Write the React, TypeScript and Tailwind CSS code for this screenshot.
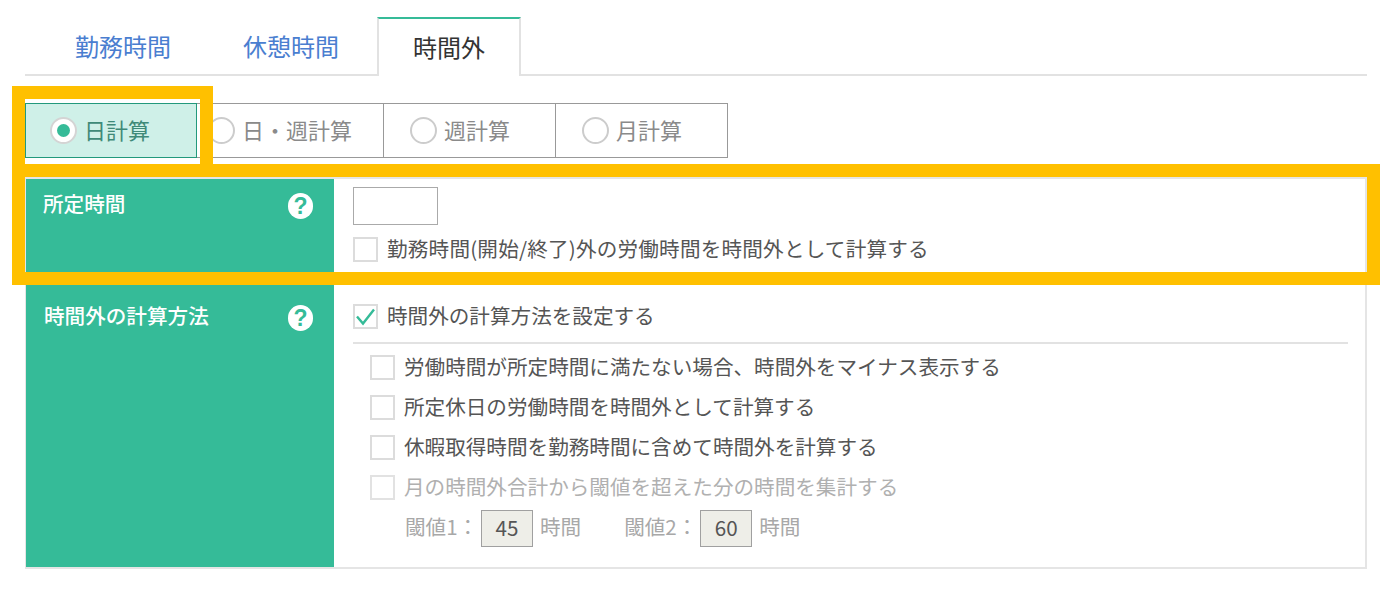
const Box = ({ checked = false, faded = false }: { checked?: boolean; faded?: boolean }) => (
  <span className={`flex h-[25px] w-[25px] shrink-0 items-center justify-center border-2 bg-white ${faded ? "border-[#e2e2e2]" : "border-[#dcdcdc]"}`}>
    {checked && (
      <svg width="21" height="21" viewBox="0 0 21 21" fill="none">
        <path d="M2 10.5 L8 17.5 L19 3.5" stroke="#35bb98" strokeWidth="2.4" />
      </svg>
    )}
  </span>
);

const Check = ({ label, checked, faded, className = "", textClass = "" }: { label: string; checked?: boolean; faded?: boolean; className?: string; textClass?: string }) => (
  <div className={`flex h-[25px] items-center gap-[9px] ${className}`}>
    <Box checked={checked} faded={faded} />
    <span className={`pb-[2px] text-[20.6px] leading-none ${faded ? "text-[#b0b0b0]" : "text-[#555555]"} ${textClass}`}>{label}</span>
  </div>
);

const Help = () => (
  <span className="flex h-[26px] w-[25px] items-center justify-center rounded-full bg-white font-['Liberation_Sans',sans-serif] text-[23px] font-bold leading-none text-[#35bb98]">?</span>
);

const Radio = ({ label, active, className = "", circleClass = "ml-[26px]" }: { label: string; active?: boolean; className?: string; circleClass?: string }) => (
  <div className={`flex h-[55px] items-center ${active ? "border-[1.5px] border-[#22997c] bg-[#cff0e8]" : "border-y-[1.5px] border-r-[1.5px] border-[#999999] bg-white"} ${className}`}>
    <span className={`flex h-[27px] w-[27px] items-center justify-center rounded-full border-2 bg-white ${active ? "border-[#d4d4d4]" : "border-[#cccccc]"} ${circleClass}`}>
      {active && <span className="h-[13px] w-[13px] rounded-full bg-[#35bb98]" />}
    </span>
    <span className={`ml-[7px] pb-[4px] text-[22px] leading-none ${active ? "text-[#3f8a78]" : "text-[#8a8a8a]"}`}>{label}</span>
  </div>
);

const Threshold = ({ label, value, className = "" }: { label: string; value: string; className?: string }) => (
  <div className={`flex items-center text-[20.6px] leading-none text-[#a8a8a8] ${className}`}>
    <span className="w-[76px] pb-[4px]">{label}</span>
    <span className="flex h-[37px] w-[52px] items-center justify-center border-[1.5px] border-[#a0a0a0] bg-[#eeeee8] pb-[2px] text-[#555555]">{value}</span>
    <span className="ml-[7px] pb-[4px]">時間</span>
  </div>
);

export default function App() {
  return (
    <div className="relative h-[590px] w-[1392px] overflow-hidden bg-white pl-[25px] pr-[25px] pt-[17px] font-['Noto_Sans_CJK_JP','Noto_Sans_CJK_SC',sans-serif]">
      <div className="flex h-[59px] items-stretch border-b-2 border-[#e2e2e2] pl-[14px] text-[24px] leading-none">
        <div className="flex w-[168px] items-center justify-center text-[#4a7ed0]">勤務時間</div>
        <div className="flex w-[168px] items-center justify-center text-[#4a7ed0]">休憩時間</div>
        <div className="-mb-[2px] ml-[2px] flex w-[144px] items-center justify-center border-x-2 border-t-2 border-x-[#e2e2e2] border-t-[#35bb98] bg-white pb-[2px] text-[#333333]">時間外</div>
      </div>

      <div className="mt-[27px] flex">
        <Radio label="日計算" active className="w-[172px]" circleClass="ml-[24px]" />
        <Radio label="日・週計算" className="w-[187px]" circleClass="ml-[11px]" />
        <Radio label="週計算" className="w-[172px]" />
        <Radio label="月計算" className="w-[172px]" />
      </div>

      <div className="mt-[19px] border-y-2 border-l border-r-2 border-[#e5e5e5]">
        <div className="grid h-[106px] grid-cols-[308px_1fr]">
          <div className="flex items-start justify-between bg-[#35bb98] pl-[17px] pr-[21px] pt-[14px]">
            <span className="text-[20.6px] font-medium leading-none text-white">所定時間</span>
            <Help />
          </div>
          <div className="pl-[19px] pt-[8px]">
            <div className="h-[38px] w-[85px] border-[1.5px] border-[#aaaaaa] bg-white" />
            <Check className="mt-[12px]" textClass="tracking-[0.2px]" label="勤務時間(開始/終了)外の労働時間を時間外として計算する" />
          </div>
        </div>
        <div className="grid h-[282px] grid-cols-[308px_1fr]">
          <div className="flex items-start justify-between bg-[#35bb98] pl-[18px] pr-[21px] pt-[20px]">
            <span className="text-[20.6px] font-medium leading-none text-white">時間外の計算方法</span>
            <Help />
          </div>
          <div className="pl-[19px] pr-[17px] pt-[19px]">
            <Check checked label="時間外の計算方法を設定する" />
            <div className="mt-[13px] border-t-2 border-[#e2e2e2] pl-[17px] pt-[11px]">
              <Check label="労働時間が所定時間に満たない場合、時間外をマイナス表示する" />
              <Check className="mt-[15px]" label="所定休日の労働時間を時間外として計算する" />
              <Check className="mt-[15px]" label="休暇取得時間を勤務時間に含めて時間外を計算する" />
              <Check className="mt-[15px]" faded label="月の時間外合計から閾値を超えた分の時間を集計する" />
              <div className="ml-[35px] mt-[10px] flex">
                <Threshold label="閾値1：" value="45" />
                <Threshold className="ml-[43px]" label="閾値2：" value="60" />
              </div>
            </div>
          </div>
        </div>
      </div>

      <div className="absolute left-[12px] top-[86px] h-[78px] w-[201px] border-x-[13px] border-t-[13px] border-[#ffc000]" />
      <div className="absolute left-[12px] top-[164px] h-[121px] w-[1368px] border-[13px] border-[#ffc000]" />
    </div>
  );
}
